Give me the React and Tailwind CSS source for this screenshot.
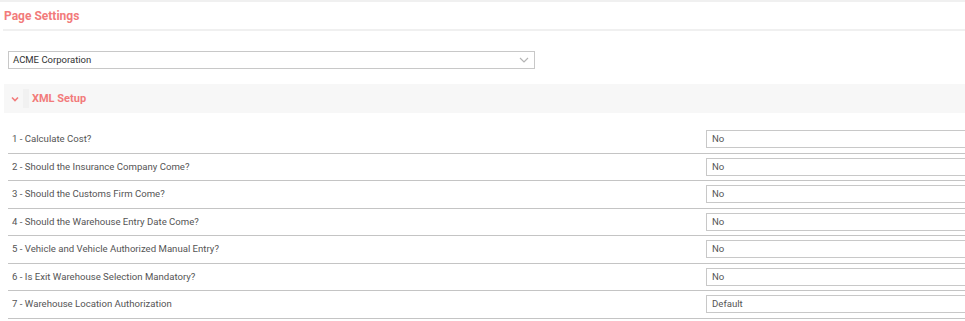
import React from "react";

const rows = [
  ["1 - Calculate Cost?", "No"],
  ["2 - Should the Insurance Company Come?", "No"],
  ["3 - Should the Customs Firm Come?", "No"],
  ["4 - Should the Warehouse Entry Date Come?", "No"],
  ["5 - Vehicle and Vehicle Authorized Manual Entry?", "No"],
  ["6 - Is Exit Warehouse Selection Mandatory?", "No"],
  ["7 - Warehouse Location Authorization", "Default"],
];

export default function App() {
  return (
    <div className="w-[965px] h-[321px] overflow-hidden bg-white font-['Roboto',sans-serif] border-t-2 border-[#f0f0f0]">
      <div className="ml-[3px] h-[29px] flex items-center border-b-2 border-[#f0f0f0]">
        <span className="ml-[1px] text-[12px] font-bold text-[#f27b7b] leading-none">Page Settings</span>
      </div>
      <div className="mt-[20px] ml-[8px] w-[527px] h-[18px] border border-[#c8c8c8] flex items-center justify-between pl-[4px] pr-[5px]">
        <span className="text-[9.5px] text-[#333] leading-none">ACME Corporation</span>
        <svg width="10" height="6" viewBox="0 0 10 6" fill="none">
          <path d="M1 1l4 4 4-4" stroke="#b5b5b5" strokeWidth="1.2" />
        </svg>
      </div>
      <div className="mt-[15px] ml-[4px] h-[29px] bg-[#f7f7f7] flex items-center">
        <svg className="ml-[7px]" width="8" height="6" viewBox="0 0 8 6" fill="none">
          <path d="M1 1.5l3 3 3-3" stroke="#f27b7b" strokeWidth="1.6" />
        </svg>
        <div className="ml-[4px] w-[6px] h-[19px] bg-[#f1f1f1]" />
        <span className="ml-[3px] text-[11px] font-bold text-[#f27b7b] leading-none">XML Setup</span>
      </div>
      <div className="mt-[13px] ml-[8px] w-[1000px]">
        {rows.map(([label, value]) => (
          <div
            key={label}
            className="grid grid-cols-[698px_1fr] items-center h-[27.5px] border-b border-[#c4c4c4]"
          >
            <span className="pl-[4px] text-[9.6px] text-[#555] leading-none">{label}</span>
            <div className="h-[18px] border border-[#c8c8c8] flex items-center pl-[5px]">
              <span className="text-[9.6px] text-[#555] leading-none">{value}</span>
            </div>
          </div>
        ))}
      </div>
    </div>
  );
}
